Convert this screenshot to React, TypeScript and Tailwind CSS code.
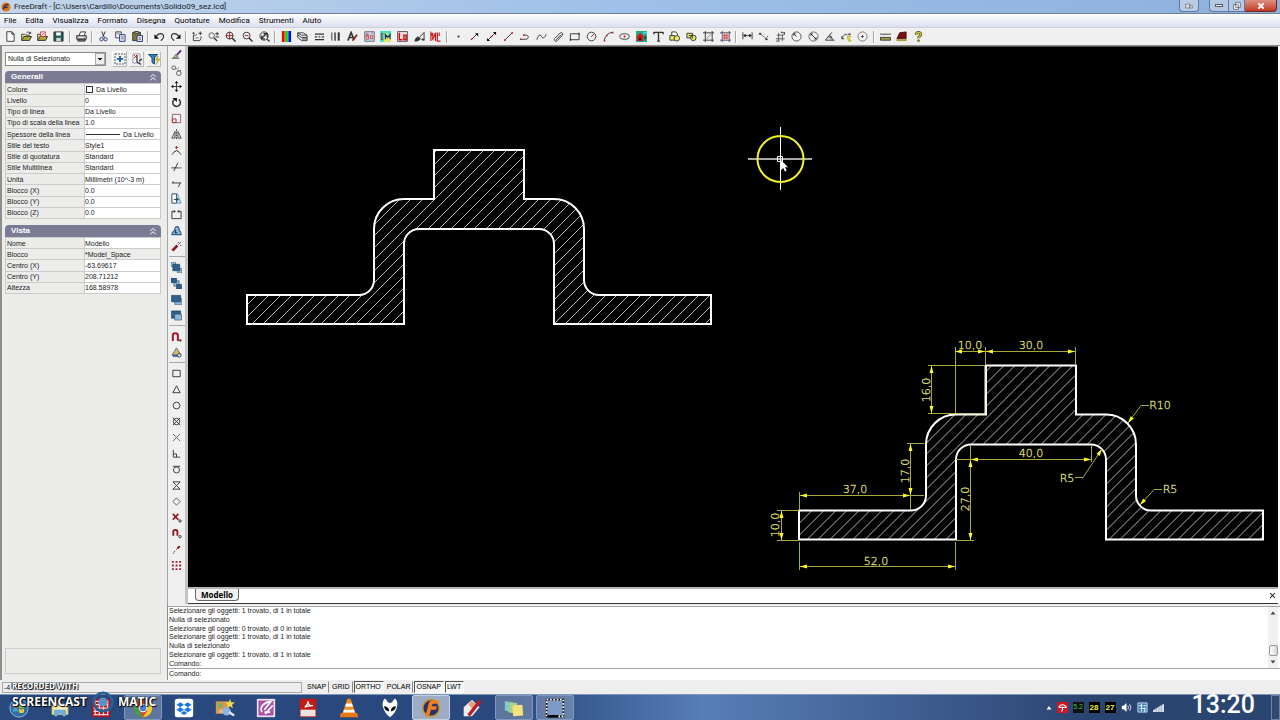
import { useState } from "react";
import type { ReactNode } from "react";

type Tool = { label: string; art: ReactNode };

const t = (label: string, art: ReactNode): Tool => ({ label, art });

function Glyph({ children, className = "w-3 h-3" }: { children: ReactNode; className?: string }) {
  return (
    <svg viewBox="0 0 12 12" className={`${className} shrink-0`} fill="none" stroke="#333" strokeWidth="1" aria-hidden="true">
      {children}
    </svg>
  );
}

const magnifier = (
  <>
    <circle cx="5" cy="5" r="3.7" />
    <path d="M7.7 7.7 11.5 11.5" strokeWidth="1.6" />
  </>
);

const folder = (
  <>
    <path d="M.8 10V3.5H4l1 1h4V6" fill="#f4ee8a" />
    <path d="M.8 10.3 3 6h8.500l-2.200 4.300z" fill="#a9a63a" />
  </>
);

const toolGroups: { width: string; tools: Tool[] }[] = [
  {
    width: "w-[61px]",
    tools: [
      t("Nuovo", <path d="M2 .8h5.500L10 3.500v7.700H2zM7.500.8v2.700H10" fill="#fff" />),
      t("Apri", <>{folder}<path d="M6 2c1.500-1.500 3-1 4 .5M10.500.8v2H8.500" /></>),
      t("Apri modello", <>{folder}<path d="M4 1h5v5H4z" fill="#fff" stroke="#c33" /><path d="M5 5 8 2" stroke="#c33" /></>),
      t("Salva", <><path d="M1 1h10v10H1z" fill="#1f5a52" /><path d="M3.500 1.500h5v3.500h-5z" fill="#fff" stroke="none" /><path d="M3.500 7.500h5V11h-5z" fill="#cfd8d6" stroke="none" /></>),
    ],
  },
  {
    width: "w-3",
    tools: [
      t("Stampa", <><path d="M3.500 4.500 5 1h5.500L9 4.500" fill="#fff" /><path d="M.8 5h10.400v4H.8z" fill="#bbb" /><path d="M2 9h8v2H2z" fill="#777" /><path d="M3 7h5" stroke="#eee" /></>),
    ],
  },
  {
    width: "w-[46px]",
    tools: [
      t("Taglia", <><path d="M4 .5 7 7M8 .5 5 7" stroke="#223" /><circle cx="3.800" cy="9" r="1.800" stroke="#23366e" /><circle cx="8.200" cy="9" r="1.800" stroke="#23366e" /></>),
      t("Copia", <><path d="M.8 1h6v6.500h-6z" fill="#fff" stroke="#334" /><path d="M5 4h6v7.300H5z" fill="#e8ecff" stroke="#23366e" /><path d="M6.500 6.500h3M6.500 8.500h3M2 3h3" stroke="#667" /></>),
      t("Incolla", <><path d="M.8 1.500h8.500v9H.8z" fill="#7d7a32" /><path d="M3 .5h4v2H3z" fill="#ddd" /><path d="M5.500 5h6v6.500h-6z" fill="#e8ecff" stroke="#23366e" /><path d="M7 7.500h3M7 9.500h3" stroke="#667" /></>),
    ],
  },
  {
    width: "w-7",
    tools: [
      t("Annulla", <><path d="M2.500 6C4 2 10.500 1.500 10.500 6c0 2-1.500 3-3 4.500" strokeWidth="1.3" /><path d="M.5 3.500v5h5z" fill="#111" stroke="none" /></>),
      t("Ripeti", <><path d="M9.500 6C8 2 1.500 1.500 1.500 6c0 2 1.500 3 3 4.500" strokeWidth="1.300" /><path d="M11.500 3.500v5h-5z" fill="#111" stroke="none" /></>),
    ],
  },
  {
    width: "w-[79px]",
    tools: [
      t("Panoramica", <><path d="M1.500 4.500v6h7c1-1.500 1.500-3 1.500-4.500M1.500 4.500h2M4 5l1-1.500M7 2.500h4M9 .5v4M.5 2.500h2.500M1.500 1.500v2" /><path d="M3.500 7.500h4" stroke="#777" /></>),
      t("Zoom dinamico", <><circle cx="4" cy="5" r="3" stroke="#555" /><path d="M6.500 7.500 10 11" strokeWidth="1.500" /><path d="M8 3h4M10 1v4M8 6.500h4" /></>),
      t("Zoom avanti", <>{magnifier}<path d="M5 .5v9M.5 5h9" stroke="#a22" /></>),
      t("Zoom indietro", <>{magnifier}<path d="M3 5h4" stroke="#a22" /></>),
      t("Zoom estensioni", <><circle cx="5.500" cy="5.500" r="4.500" /><path d="M2.500 8.500 9 2M5 3h4v4M3 5v3.500h3.500" strokeWidth="1.400" /><path d="M9 9l2.500 2.500" strokeWidth="1.500" /></>),
    ],
  },
  {
    width: "w-[162px]",
    tools: [
      t("Colore", <g stroke="none"><path d="M1 0h3v12H1z" fill="#f00" /><path d="M4.500 0h3v12h-3z" fill="#00e000" /><path d="M8 0h3v12H8z" fill="#0010e8" /></g>),
      t("Livelli", <><path d="M.8 2h6l4 2.500H5z" fill="#fff" /><path d="M.8 2v5L5 10.500h6v-6M1 4.500 5 7h6M5 8.700h6" /></>),
      t("Tipo di linea", <path d="M1 3.500h10M1 6.500h2.500M5 6.500h2M8.500 6.500H11M1 9.500h10" strokeWidth="1.300" />),
      t("Spessore linea", <><path d="M2 1.500v9" /><path d="M5.500 1.500v9" strokeWidth="1.500" /><path d="M9.500 1.500v9" strokeWidth="2.200" /></>),
      t("Stile testo", <><path d="M1 10.500 4.500 1.500 7.500 9M2.500 7h4" strokeWidth="1.700" /><path d="M6 10.500 11 4" stroke="#8a1a1a" strokeWidth="1.800" /></>),
      t("Blocchi", <><path d="M.8.8h10.400v10.400H.8z" fill="#cdd9ee" stroke="#667" /><path d="M2.500 3h2v2.500h-2zM2.500 5.500h2.500V9H2.500zM7 5h2.500v3.500H7zM8 2.500h1.500" stroke="#c44" /></>),
      t("Immagini", <><path d="M0 0h12v12H0z" fill="#3fe3c8" stroke="none" /><path d="M6 1 12 6v6H4z" fill="#e8e460" stroke="none" /><path d="M2 3v6M1 3h2.500M1 9h2.500" stroke="#c22" strokeWidth="1.300" /><path d="M6 9V4l2.500 3L11 4v5" stroke="#17306b" strokeWidth="1.300" /></>),
      t("Layout", <><path d="M.6.6h10.800v10.800H.6z" fill="#f6dede" stroke="#556" /><path d="M2.500 2v7.500H6M7.500 4.500h2.500v5H7.500z" stroke="#c11" strokeWidth="1.600" /></>),
      t("Pennello", <><path d="M1 11c.5-3 2-4.500 4-4.500L7 8.500C5.500 10.500 3.500 11 1 11z" fill="#333" /><path d="M6.500 6.500 11 1.500V9H8" /><path d="M9 9.500h2.500" strokeWidth="2" /></>),
      t("Multilinea", <path d="M1 11V2l3 5 2-5v9M8 1.500v9.500h3.500M10 1.500v4M3 2v8" stroke="#c21c1c" strokeWidth="1.300" />),
    ],
  },
  {
    width: "w-[279px]",
    tools: [
      t("Punto", <path d="M5 6h2" strokeWidth="2" />),
      t("Raggio", <><path d="M2.500 9.500 9 3" /><path d="M6.500 2.500H10V6z" fill="#111" stroke="none" /><path d="M2 9h1.500" stroke="#a22" strokeWidth="1.500" /></>),
      t("Retta", <><path d="M2 10 10 2" /><path d="M7.500 1H11v3.500zM1 7.500V11h3.500z" fill="#111" stroke="none" /><path d="M5 6h2" stroke="#a22" strokeWidth="1.500" /></>),
      t("Linea", <><path d="M2 10 10 2" /><path d="M1.200 10h1.600M9.200 2h1.600" stroke="#a22" strokeWidth="1.800" /></>),
      t("Polilinea", <><path d="M1.500 9h6c3.500 0 3.500-4.500 0-4.500H5" /><path d="M1 9h1.500M4.500 4.500H6" stroke="#a22" strokeWidth="1.700" /></>),
      t("Spline", <path d="M1 9.500C2.500 4 4.500 3 6 6c1.500 2.500 3.500 2 5-2.500" />),
      t("Doppia linea", <path d="M1.500 8.500 8 2c1-1 3.500 1 2.500 2.500L4 11c-1.500.5-3-1-2.500-2.500zM3.500 9.500 9 4" />),
      t("Rettangolo", <><path d="M1.500 3h9.500v6.500H1.500z" /><path d="M.8 9.500h1.600M10 3h1.600" strokeWidth="2" /></>),
      t("Cerchio", <><circle cx="6" cy="6" r="4.700" /><path d="M5.500 6.500 9 3" stroke="#a22" /></>),
      t("Arco", <><path d="M1.500 10.500C2 6 5 2 10.500 1.500" /><path d="M.8 10.500h1.600M3.300 5h1.600M9.700 1.700h1.600" stroke="#a22" strokeWidth="1.800" /></>),
      t("Ellisse", <><ellipse cx="6" cy="6" rx="5.200" ry="3" /><path d="M5 6h2M6 5v2" stroke="#a22" strokeWidth="1.400" /></>),
      t("Blocco", <><path d="M0 0h12v12H0z" fill="#17b08a" stroke="none" /><path d="M1 5.500 4.500 2 8 5.500V11H1z" fill="#e01010" stroke="none" /><path d="M3.500 7h2v3h-2z" fill="#111" stroke="none" /><path d="M8 1h4v4H8z" fill="#3ad7e8" stroke="none" /><path d="M10 3v7M8.500 7h3" stroke="#0c4b20" /></>),
      t("Testo", <path d="M1 1.500h10M6 1.500V11M1 1v2.500M11 1v2.500M4.500 11h3" strokeWidth="1.500" />),
      t("Copia blocco", <><path d="M3 1h4.500l1.500 2v5H3z" fill="#fff" /><path d="M1 5h5v5H1z" fill="#e9e96a" /><circle cx="8.500" cy="8" r="3" fill="#e9e96a" /></>),
      t("Inserisci", <><path d="M1 2.500h6v5H1z" fill="#e9e96a" /><circle cx="8" cy="7.500" r="3" fill="#e9e96a" /><path d="M3 5h4v3" /></>),
      t("Contorno", <><path d="M2.500 0v12M0 2h12M10 0v12M0 10h12" /><path d="M3.500 9 9 3" stroke="#88a" /></>),
      t("Tratteggio", <><path d="M2.500 0v12M0 2h12M10 0v12M0 10h12" stroke="#446" /><path d="M3 2.500h6.500v7H3z" fill="#e8b3b8" stroke="none" /><path d="M3 5h6.500M3 7.500h6.500M5 2.500v7M7.500 2.500v7" stroke="#b33" strokeWidth=".6" /></>),
    ],
  },
  {
    width: "w-[128px]",
    tools: [
      t("Quota lineare", <><path d="M1 1.500V9M11 1.500V9M2 5h8" /><path d="M1.500 5 4 3v4zM10.500 5 8 3v4z" fill="#111" stroke="none" /></>),
      t("Quota allineata", <><path d="M2.500 3 9.500 9" strokeDasharray="2 1" /><path d="M1.500 2.500h1.500v1H1.500zM8.500 8.500H10v1H8.500zM9.500 7 11 5.500" fill="#111" /></>),
      t("Quota ordinate", <><path d="M2 4.500h7M4 2v9M8 4v7M1 8.500h9.500M1 11h4" strokeWidth=".8" /><path d="M6.500 1.500h2M10 1v3" stroke="#444" strokeWidth="1.600" /></>),
      t("Quota raggio", <><circle cx="6" cy="6" r="5" stroke="#555" /><path d="M6 6 3 3M3 5V3h2" /></>),
      t("Quota diametro", <><circle cx="6" cy="6" r="5" stroke="#666" /><path d="M3 3l6 6" /><path d="M3 3h2L3 5zM9 9V7L7 9z" fill="#111" strokeWidth=".5" /></>),
      t("Quota angolare", <path d="M11.500 10H1.500L8.500 1.500M6 4.500c2 1 3 3 3 5.500M4.500 6.500h3v2" />),
      t("Direttrice", <><path d="M1 8.500C2.500 4 5 3 7 4M1 8.500v-3M1 8.500h2.500" /><path d="M7 5.500h3.500L9 8l2 3H8z" fill="#efe94a" stroke="#b5ae25" /><path d="M8 3.500h2.500" strokeWidth="1.500" /></>),
      t("Segno centro", <><circle cx="6" cy="6" r="5" stroke="#777" /><path d="M4.500 6h3M6 4.500v3" stroke="#444" /></>),
    ],
  },
  {
    width: "w-[45px]",
    tools: [
      t("Distanza", <><path d="M1 2.500v2M11 2.500v2M2 3.500h8" /><path d="M.5 7h11v3H.5z" fill="#a8a33c" /></>),
      t("Area", <><path d="M1 8.500 4 2l7-1v7.500z" fill="#7a0f14" stroke="#4b0a0d" /><path d="M.5 9h11v2H.5z" fill="#a8a33c" stroke="none" /></>),
      t("Guida", <><path d="M3.500 4C3 .8 9 .8 8.500 4 8 6 6 5.500 6 8" stroke="#4a4a10" strokeWidth="3" /><path d="M3.500 4C3 .8 9 .8 8.500 4 8 6 6 5.500 6 8" stroke="#d2cf35" strokeWidth="1.500" /><circle cx="6" cy="10.500" r="1" fill="#d2cf35" stroke="#4a4a10" /></>),
    ],
  },
];

const back = "#8fb6d6";
const front = "#2d5f91";

const sideGroups: Tool[][] = [
  [
    t("Cancella", <><path d="M1 10h8" /><path d="m5 6 2.500 2L5 9.500 3 9z" fill="#d9d07a" stroke="#665" /><path d="M6.500 6.500 11 1.500" stroke="#5c2a7a" strokeWidth="2" /></>),
    t("Copia", <><circle cx="3" cy="3" r="2" stroke="#555" /><circle cx="8.500" cy="9" r="2.500" stroke="#555" /><path d="M5 4.500 9 3M7 6h4" stroke="#555" strokeDasharray="1.500 1" /></>),
    t("Sposta", <><path d="M6 1v10M1 6h10" /><path d="m6 0 2 2.500H4zM6 12l2-2.500H4zM0 6l2.500-2v4zM12 6 9.500 4v4z" fill="#111" stroke="none" /></>),
    t("Ruota", <><path d="M4 2.500a4.200 4.200 0 1 0 4.500.2" strokeWidth="1.600" /><path d="M1.500 1h5v4.500z" fill="#111" stroke="none" /></>),
    t("Scala", <><path d="M1.500 1.500h9v9h-9z" stroke="#866" /><path d="M1.500 6.500h4v4h-4z" stroke="#a33" /></>),
    t("Specchio", <><path d="M6 0v12" strokeDasharray="2 1" /><path d="M4.500 2.500V10H.8zM7.500 2.500V10h3.700z" fill="#ccc" strokeWidth=".8" /></>),
    t("Raccorda", <><path d="M1 10.500 4.500 6.500M11 10.500 7.500 6.500M4.500 7.500l1.500-2 1.500 2" /><path d="M6 1v3.500M4.300 2.700h3.400" stroke="#c22" /></>),
    t("Taglia", <><path d="M.5 7.500h11M3 11 7.500 2" /><path d="M7.500 7.500h4" stroke="#eee" strokeDasharray="1 1" /></>),
    t("Estendi", <path d="M1 6.500h9.500M10.500 6 8 11M1 6.500 3 5" />),
    t("Allunga", <><path d="M1 1h6l4 10H1z" fill="#b7dcf2" stroke="#59c" /><path d="M1 1h5v10H1z" fill="#fff" stroke="#456" /><path d="M3 7h5M6.500 5.500 8 7 6.500 8.500" /></>),
    t("Spezza", <><path d="M4 2.500H1v8h10v-8H8" stroke="#333" /><path d="M3 1.500 5 2.500 3 4M9 1.500 7 2.500 9 4" fill="#333" strokeWidth=".5" /></>),
    t("Offset", <><path d="M1 10.500C1 7 3 7 4 6c0-5.500 5-5.500 5 0 2 1 2 2 2 4.500z" fill="#8fb6d6" stroke="#2d5f91" strokeWidth="1.300" /><path d="M5 8.500v-3M4 8.500h3" stroke="#123" /></>),
    t("Esplodi", <><path d="M1.500 10.500 7 5" stroke="#8c1c22" strokeWidth="3" /><path d="M8 4l3-3M8 1v1.500M10 5h1.500" stroke="#555" /></>),
  ],
  [
    t("Porta in primo piano", <g strokeWidth=".6"><path d="M0 0h5v5H0z" fill={back} stroke="#456" /><path d="M7 7h5v5H7z" fill={back} stroke="#456" /><path d="M2 2.500h7.500v7H2z" fill={front} stroke="#134" /></g>),
    t("Porta dietro", <g strokeWidth=".6"><path d="M3 3h6v6H3z" fill={back} stroke="#456" /><path d="M0 0h6v5H0z" fill={front} stroke="#134" /><path d="M6 7h5.500v5H6z" fill={front} stroke="#134" /></g>),
    t("Porta avanti", <g strokeWidth=".6"><path d="M4 5h8v6.500H4z" fill={back} stroke="#456" /><path d="M.5 1.500h10v7H.5z" fill={front} stroke="#134" /></g>),
    t("Porta sotto", <g strokeWidth=".6"><path d="M.5 1h10v8H.5z" fill={front} stroke="#134" /><path d="M4 4.500h7.500V11H4z" fill={back} stroke="#345" /></g>),
  ],
  [
    t("Snap a oggetto", <><path d="M2 11V5c0-3.500 5.500-3.500 5.500 0v6" stroke="#a3162a" strokeWidth="2.200" /><path d="M9.500 9.500H11V11H9.500z" stroke="#333" /></>),
    t("Impostazioni snap", <><path d="M1 9 6 1l5 8z" fill="#d8bd5a" stroke="#667" /><path d="M2 9.500h7" stroke="#37659c" strokeWidth="2.500" /><circle cx="9" cy="9" r="2" fill="#ddd" stroke="#345" /></>),
  ],
  [
    t("Fine", <path d="M2 2.500h8v7H2z" />),
    t("Medio", <path d="M6 2 10 9.500H2z" />),
    t("Centro", <circle cx="6" cy="6" r="3.700" />),
    t("Nodo", <><circle cx="6" cy="6" r="3.500" /><path d="m2 2 8 8M10 2l-8 8" /></>),
    t("Intersezione", <path d="m2 2 8 8M10 2l-8 8" stroke="#666" />),
    t("Perpendicolare", <path d="M2.500 2v8H10M2.500 6.500H6V10" />),
    t("Tangente", <><circle cx="6" cy="6.500" r="3.300" /><path d="M2 2.500h8" /></>),
    t("Vicino", <path d="M2 2h8L2 10h8z" />),
    t("Quadrante", <path d="m6 2 4 4-4 4-4-4z" stroke="#555" />),
    t("Nessuno snap", <><path d="m2 2 6 6.500M8 2 2 8.500" stroke="#8c1420" strokeWidth="1.800" /><circle cx="9.800" cy="9.800" r="1.300" /></>),
    t("Snap rapido", <><path d="M2.500 8.500V4c0-2.500 4.500-2.500 4.500 0v4.500" stroke="#8c1420" strokeWidth="2" /><circle cx="9.800" cy="9.500" r="1.300" /></>),
    t("Da punto", <><path d="m3 9 5-5" stroke="#a33" strokeDasharray="2 1" /><path d="M7 5 9.500 2.500" stroke="#8c1420" strokeWidth="2.200" /><path d="M2 10h1.500" stroke="#a33" /></>),
    t("Griglia", <path d="M1 2h2M5 2h2M9 2h2M1 6h2M5 6h2M9 6h2M1 10h2M5 10h2M9 10h2" stroke="#a3162a" strokeWidth="2" />),
  ],
];

const generalRows: [string, string][] = [
  ["Colore", "Da Livello"],
  ["Livello", "0"],
  ["Tipo di linea", "Da Livello"],
  ["Tipo di scala della linea", "1.0"],
  ["Spessore della linea", "Da Livello"],
  ["Stile del testo", "Style1"],
  ["Stile di quotatura", "Standard"],
  ["Stile Multilinea", "Standard"],
  ["Unità", "Millimetri (10^-3 m)"],
  ["Blocco (X)", "0.0"],
  ["Blocco (Y)", "0.0"],
  ["Blocco (Z)", "0.0"],
];

const viewRows: [string, string][] = [
  ["Nome", "Modello"],
  ["Blocco", "*Model_Space"],
  ["Centro (X)", "-63.69617"],
  ["Centro (Y)", "208.71212"],
  ["Altezza", "168.58978"],
];

const logLines = [
  "Selezionare gli oggetti: 1 trovato, di 1 in totale",
  "Nulla di selezionato",
  "Selezionare gli oggetti: 0 trovato, di 0 in totale",
  "Selezionare gli oggetti: 1 trovato, di 1 in totale",
  "Nulla di selezionato",
  "Selezionare gli oggetti: 1 trovato, di 1 in totale",
  "Comando:",
];

function TitleBar() {
  return (
    <header className="flex h-[13px] shrink-0 items-center justify-between bg-linear-to-r from-[#c3d5ea] via-[#9dbfe8] to-[#8db0de] pl-px">
      <div className="flex items-center gap-[3px]">
        <Glyph className="w-[10px] h-[10px]">
          <circle cx="6" cy="6" r="5.500" fill="#e07a1c" stroke="none" />
          <path d="M3 9C3 4 5 3 9 3M4.500 6.500H8" stroke="#2b2f63" strokeWidth="2" />
        </Glyph>
        <h1 className="font-['Roboto',sans-serif] text-[8px] leading-3 text-[#16181c]">FreeDraft - [C:\Users\Cardillo\Documents\Solido09_sez.lcd]</h1>
      </div>
      <div className="flex h-3 items-start self-start pr-[3px]">
        <button aria-label="Sposta schermo" className="mr-2.5 flex h-3 w-5 items-center justify-center rounded-b-sm border border-t-0 border-[#5f7a9c] bg-[#b9cce4]">
          <Glyph className="w-[10px] h-2"><path d="M1 3h6v6H1zM7 5h4v4H7z" stroke="#667" fill="#ddd" /></Glyph>
        </button>
        <button aria-label="Riduci a icona" className="flex h-3 w-5 items-center justify-center rounded-bl-sm border border-t-0 border-[#5f7a9c] bg-[#b4c9e3]">
          <span className="h-[3px] w-2 border border-[#556] bg-white" />
        </button>
        <button aria-label="Ripristina" className="flex h-3 w-4 items-center justify-center border border-t-0 border-l-0 border-[#5f7a9c] bg-[#b4c9e3]">
          <Glyph className="w-2 h-2"><path d="M4 1h7v7H4zM1 4h7v7H1z" stroke="#445" fill="#fff" /></Glyph>
        </button>
        <button aria-label="Chiudi" className="flex h-3 w-8 items-center justify-center rounded-br-sm border border-t-0 border-l-0 border-[#6b2a24] bg-linear-to-b from-[#dd8f83] to-[#c2361f]">
          <Glyph className="w-2 h-2"><path d="m2 2 8 8M10 2l-8 8" stroke="#fff" strokeWidth="3" /></Glyph>
        </button>
      </div>
    </header>
  );
}

function MenuBar() {
  const menus = ["File", "Edita", "Visualizza", "Formato", "Disegna", "Quotature", "Modifica", "Strumenti", "Aiuto"];
  return (
    <nav className="flex h-[15px] shrink-0 items-center gap-[9px] border-t border-[#6f7f9c] border-b border-b-[#cfd0da] bg-linear-to-b from-white to-[#dcdff0] pl-1">
      {menus.map((m) => (
        <button key={m} className="font-['Roboto',sans-serif] text-[8px] leading-3 text-black">{m}</button>
      ))}
    </nav>
  );
}

function Toolbar() {
  return (
    <div role="toolbar" className="flex h-[18px] shrink-0 items-center border-b border-[#8b8b8b] bg-[#f0f0f0] pl-1">
      {toolGroups.map((g, i) => (
        <div key={i} className="flex items-center">
          {i > 0 && <span className="mx-1 h-3 w-0.5 border-l border-[#a5a5a5] bg-white" />}
          <div className={`flex justify-between ${g.width}`}>
            {g.tools.map((tool) => (
              <button key={tool.label} aria-label={tool.label} title={tool.label} className="flex h-3 w-3 items-center justify-center">
                <Glyph className="w-[11px] h-[11px]">{tool.art}</Glyph>
              </button>
            ))}
          </div>
        </div>
      ))}
    </div>
  );
}

function PropertySection({ title, rows, height }: { title: string; rows: [string, string][]; height: string }) {
  const [open, setOpen] = useState(true);
  return (
    <section>
      <button onClick={() => setOpen(!open)} className="flex h-3 w-full items-center justify-between rounded-t-sm bg-[#7c7b95] pl-1.5 pr-1 text-[8px] font-bold text-white">
        <span>{title}</span>
        <Glyph className="w-2 h-2"><path d="m2 6 4-4 4 4M2 11l4-4 4 4" stroke="#fff" strokeWidth="1.500" /></Glyph>
      </button>
      {open && (
        <table className={`w-full table-fixed border-collapse leading-[9px] ${height}`}>
          <tbody>
            {rows.map(([name, value]) => {
              const locked = value === "*Model_Space";
              return (
                <tr key={name}>
                  <th scope="row" className="w-[79px] overflow-visible whitespace-nowrap border border-[#cbcbc8] p-0 pl-px text-left font-normal">{name}</th>
                  <td className={`whitespace-nowrap border border-[#cbcbc8] p-0 ${locked ? "bg-[#ececea]" : "bg-white"}`}>
                    <div className="flex items-center">
                      {name === "Colore" && <span className="mr-[3px] ml-px h-[7px] w-[7px] shrink-0 border border-[#333] bg-white" />}
                      {name === "Spessore della linea" && <span className="mr-[3px] ml-px h-px w-[34px] shrink-0 bg-[#333]" />}
                      <input aria-label={name} defaultValue={value} readOnly={locked} className="h-[9px] w-full min-w-0 bg-transparent p-0 leading-[9px] outline-none" />
                    </div>
                  </td>
                </tr>
              );
            })}
          </tbody>
        </table>
      )}
    </section>
  );
}

function PropertiesPanel() {
  return (
    <aside className="flex w-[167px] shrink-0 flex-col gap-1.5 border-l-2 border-[#8e8e8e] bg-[#ececeb] pb-1.5 pl-[3px] pr-1.5 pt-[5px]">
      <div className="-mb-0.5 flex items-center justify-between">
        <div className="relative">
          <select aria-label="Selezione" className="block h-[14px] w-[101px] appearance-none border border-[#8a8a8a] bg-white pl-0.5 leading-3 outline-none">
            <option>Nulla di Selezionato</option>
          </select>
          <span className="pointer-events-none absolute right-px top-px flex h-3 w-[10px] items-center justify-center border border-[#aaa] bg-[#eee]">
            <Glyph className="w-1.5 h-1.5"><path d="M1 4h10L6 9z" fill="#111" stroke="none" /></Glyph>
          </span>
        </div>
        <div className="flex gap-0.5">
          <button aria-label="Seleziona oggetti" className="flex h-4 w-[15px] items-center justify-center border border-[#b9b9b9] border-t-white border-l-white bg-[#f1f1f0]">
            <Glyph><path d="M1 1h10v10H1z" stroke="#567" strokeDasharray="2 1" /><path d="M6 3v6M3 6h6" stroke="#2d6aa5" strokeWidth="2" /></Glyph>
          </button>
          <button aria-label="Deseleziona" className="flex h-4 w-[15px] items-center justify-center border border-[#b9b9b9] border-t-white border-l-white bg-[#f1f1f0]">
            <Glyph><path d="M2 1h7v9H2z" fill="#fff" stroke="#99a" /><path d="M6 2v7l4 2.500M8 8l3-2" stroke="#334" strokeWidth="1.300" /><path d="m3 2 3 3M6 2 3 5" stroke="#c22" /></Glyph>
          </button>
          <button aria-label="Filtro rapido" className="flex h-4 w-[15px] items-center justify-center border border-[#b9b9b9] border-t-white border-l-white bg-[#f1f1f0]">
            <Glyph><path d="M.5 1.500h9L6.500 5v6L4 9.500V5z" fill="#3b7fb8" stroke="#1d4f7c" /><path d="M10 3 7.500 7H10l-2 4.500L12 6H9.500z" fill="#f3d52b" stroke="#94801a" strokeWidth=".5" /></Glyph>
          </button>
        </div>
      </div>
      <PropertySection title="Generali" rows={generalRows} height="h-[136px]" />
      <PropertySection title="Vista" rows={viewRows} height="h-[57px]" />
      <div className="mt-auto h-[26px] border border-[#cdcdcd]" />
    </aside>
  );
}

function SideToolbar() {
  return (
    <div role="toolbar" aria-orientation="vertical" className="flex w-[18px] shrink-0 flex-col items-center border-l border-[#a5a5a5] bg-[#f0f0f0]">
      {sideGroups.map((group, i) => (
        <div key={i} className="flex flex-col items-center">
          {i > 0 && <span className="my-0.5 h-px w-4 bg-[#a9a9a9]" />}
          {group.map((tool) => (
            <button key={tool.label} aria-label={tool.label} title={tool.label} className="flex h-4 w-4 items-center justify-center">
              <Glyph className="w-[11px] h-[11px]">{tool.art}</Glyph>
            </button>
          ))}
        </div>
      ))}
    </div>
  );
}

// Bracket profile, in drawing coordinates; both views use the same outline.
const PROFILE =
  "M247 295H359A15 15 0 0 0 374 280V229A30 30 0 0 1 404 199H434V150H524V199H554A30 30 0 0 1 584 229V280A15 15 0 0 0 599 295H711V324H554V244A15 15 0 0 0 539 229H419A15 15 0 0 0 404 244V324H247Z";

function Profile({ id, phase, x = 0, y = 0 }: { id: string; phase: number; x?: number; y?: number }) {
  const lines = Array.from({ length: 66 }, (_, i) => `M${Math.round(phase + i * 11.62)} 325l190-190`).join("");
  return (
    <g transform={`translate(${x} ${y})`} fill="none">
      <clipPath id={id}><path d={PROFILE} /></clipPath>
      <path d={lines} clipPath={`url(#${id})`} stroke="#b4b4b4" strokeWidth="1" />
      <path d={PROFILE} stroke="#fff" strokeWidth="2" />
    </g>
  );
}

function Arrow({ x, y, angle }: { x: number; y: number; angle: number }) {
  return <path d="M0 0-7-2V2Z" transform={`translate(${x} ${y}) rotate(${angle})`} fill="#ffff1e" stroke="none" />;
}

function Label({ x, y, children, vertical = false }: { x: number; y: number; children: string; vertical?: boolean }) {
  return (
    <text
      transform={`translate(${x} ${y})${vertical ? " rotate(-90)" : ""}`}
      textAnchor="middle"
      fill="#f0f488"
      stroke="#d8dc6c"
      strokeWidth=".3"
      className="font-['DejaVu_Sans_Light','DejaVu_Sans',sans-serif] text-[11px] font-extralight"
    >
      {children}
    </text>
  );
}

function Dimensions() {
  return (
    <g stroke="#a9a943" strokeWidth="1" fill="none">
      <path d="M955.500 347V413M985.500 347V365M1075.500 347V364M955 351.500H1076" />
      <path d="M928 365.500H985M928 413.500H956M931.500 365V413" />
      <path d="M907 443.500H924M910.500 443V510M799 495.500H924M799.500 492V510" />
      <path d="M777 510.500H799M777 540.500H799M781.500 510V540" />
      <path d="M799.500 542V570M955.500 542V570M799 566.500H956" />
      <path d="M956 459.500H1091M970.500 445V540M956 540.500H974M1091.500 445V462" />
      <path d="M1149 405.500H1141L1128 423M1075 477.500H1083L1102 449M1162 489.500H1154L1140 505" />
      <path d="M955 414H985V366" stroke="#f4f3b4" strokeWidth="1" />
      <Arrow x={955} y={351.5} angle={180} />
      <Arrow x={985} y={351.5} angle={0} />
      <Arrow x={986} y={351.5} angle={180} />
      <Arrow x={1075} y={351.5} angle={0} />
      <Arrow x={931.5} y={366} angle={-90} />
      <Arrow x={931.5} y={413} angle={90} />
      <Arrow x={910.5} y={444} angle={-90} />
      <Arrow x={910.5} y={495} angle={90} />
      <Arrow x={800} y={495.5} angle={180} />
      <Arrow x={910} y={495.5} angle={0} />
      <Arrow x={781.5} y={511} angle={-90} />
      <Arrow x={781.5} y={540} angle={90} />
      <Arrow x={800} y={566.5} angle={180} />
      <Arrow x={955} y={566.5} angle={0} />
      <Arrow x={970.5} y={460} angle={-90} />
      <Arrow x={970.5} y={540} angle={90} />
      <Arrow x={971} y={459.5} angle={180} />
      <Arrow x={1091} y={459.5} angle={0} />
      <Arrow x={1128} y={423} angle={127} />
      <Arrow x={1102} y={449} angle={-56} />
      <Arrow x={1140} y={505} angle={131} />
      <Label x={970} y={349}>10,0</Label>
      <Label x={1031} y={349}>30,0</Label>
      <Label x={930} y={390} vertical>16,0</Label>
      <Label x={909} y={471} vertical>17,0</Label>
      <Label x={855} y={493}>37,0</Label>
      <Label x={779} y={525} vertical>10,0</Label>
      <Label x={876} y={565}>52,0</Label>
      <Label x={969} y={499} vertical>27,0</Label>
      <Label x={1031} y={457}>40,0</Label>
      <Label x={1160} y={409}>R10</Label>
      <Label x={1067} y={482}>R5</Label>
      <Label x={1170} y={493}>R5</Label>
    </g>
  );
}

function DrawingCanvas() {
  return (
    <div className="min-h-0 flex-1 border-t border-[#555] bg-black">
      <svg viewBox="188 47 1090 540" className="block h-full w-full" role="img" aria-label="Modello">
        <Profile id="plain" phase={-40} />
        <Profile id="dimensioned" phase={-37} x={552} y={215.5} />
        <Dimensions />
        <path d="M748 159H812" stroke="#a8a8a8" strokeWidth="2" />
        <path d="M780.500 127V190" stroke="#fff" />
        <circle cx="780.500" cy="159" r="23" fill="none" stroke="#f2f22c" strokeWidth="2" />
        <path d="M777.500 156.500h5v5h-5z" fill="none" stroke="#fff" />
        <path d="M781 160v10l2.300-2 1.600 3.500 1.700-.8-1.600-3.500h3z" fill="#fff" />
      </svg>
    </div>
  );
}

function CommandArea() {
  return (
    <div className="flex shrink-0 flex-col bg-[#f0f0f0] pt-0.5">
      <div className="flex h-[63px] border-y border-[#a5a5a5] bg-white">
        <div className="flex flex-1 flex-col justify-between pl-px leading-2">
          {logLines.map((line, i) => (
            <p key={i}>{line}</p>
          ))}
        </div>
        <div className="mr-0.5 flex w-[10px] flex-col items-center bg-[#f0f0f0] py-0.5">
          <button aria-label="Scorri su" className="flex h-2 items-center"><Glyph className="w-1.5 h-1.5"><path d="M6 3 11 9H1z" fill="#444" stroke="none" /></Glyph></button>
          <span className="mt-auto mb-0.5 h-[11px] w-[9px] rounded-xs border border-[#999] bg-linear-to-r from-white to-[#d5d5d5]" />
          <button aria-label="Scorri giù" className="flex h-2 items-center"><Glyph className="w-1.5 h-1.5"><path d="M1 3h10L6 9z" fill="#444" stroke="none" /></Glyph></button>
        </div>
      </div>
      <div className="flex h-[11px] items-center bg-white pl-px">
        <label htmlFor="command">Comando:</label>
        <input id="command" className="h-[9px] flex-1 pl-1 outline-none" />
      </div>
    </div>
  );
}

function StatusBar() {
  const [active, setActive] = useState<string[]>(["ORTHO", "OSNAP", "LWT"]);
  const toggle = (mode: string) =>
    setActive((prev) => (prev.includes(mode) ? prev.filter((m) => m !== mode) : [...prev, mode]));

  return (
    <div className="flex h-[14px] shrink-0 items-center gap-px bg-[#eeeeee] pl-0.5">
      <div className="mr-0.5 h-[11px] w-[300px] border border-[#a9a9a9] pl-px leading-[9px]">-4</div>
      {["SNAP", "GRID", "ORTHO", "POLAR", "OSNAP", "LWT"].map((mode) => (
        <button
          key={mode}
          onClick={() => toggle(mode)}
          aria-pressed={active.includes(mode)}
          className={`h-3 border pr-0.5 pl-px leading-[10px] text-black ${active.includes(mode) ? "border-[#fafafa] border-l-[#555] border-t-[#555] bg-[#f6f6f6]" : "border-transparent border-r-[#888]"}`}
        >
          {mode}
        </button>
      ))}
    </div>
  );
}

const taskItems: { label: string; state: string; art: ReactNode }[] = [
  { label: "Start", state: "", art: <><circle cx="12" cy="12" r="11" fill="#2f6fa6" stroke="#9cc6e6" /><path d="M5 8q3-2 6 0v4q-3-2-6 0z" fill="#e5622a" /><path d="M12 8q3 2 6 0v4q-3 2-6 0z" fill="#86bf3c" /><path d="M5 13q3-2 6 0v4q-3-2-6 0z" fill="#3fa0e0" /><path d="M12 13q3 2 6 0v4q-3 2-6 0z" fill="#f2c62d" /></> },
  { label: "Esplora risorse", state: "", art: <><path d="M2 5h8l2 2h10v13H2z" fill="#e9cf74" /><path d="M4 9h16v7H4z" fill="#f8eeb5" /><path d="M5 14h14v8h-4v-3H9v3H5z" fill="#69aede" /></> },
  { label: "Registratore", state: "", art: <><path d="M1 1h22v22H1z" fill="#b0141c" /><path d="M3 4h18M3 8h18M3 12h18M3 16h18M3 20h18M5 3v18M10 3v18M15 3v18M20 3v18" stroke="#f3d5d5" strokeWidth="1.500" /></> },
  { label: "Chrome", state: "border-[#7e98c0] bg-white/25", art: <><circle cx="12" cy="12" r="11" fill="#e0442f" /><path d="M2.500 6.500 8 16l4 7A11 11 0 0 1 2.500 6.500z" fill="#3fa14b" /><path d="M22 7.500H12l5 8L12 23A11 11 0 0 0 22 7.500z" fill="#f3cb32" /><circle cx="12" cy="12" r="5" fill="#fff" /><circle cx="12" cy="12" r="4" fill="#4680d8" /></> },
  { label: "Dropbox", state: "", art: <><rect x="1" y="1" width="22" height="22" rx="3" fill="#fff" /><path d="m7.500 5 4.500 3-4.500 3L3 8zM16.500 5 21 8l-4.500 3L12 8zM7.500 11l4.500 3-4.500 3L3 14zM16.500 11l4.500 3-4.500 3-4.500-3zM12 15.500l4 2.500-4 2.500L8 18z" fill="#1878e0" /></> },
  { label: "Galleria", state: "", art: <><path d="M1 4h15v15H1z" fill="#d09a55" /><circle cx="6" cy="9" r="3" fill="#7fae6b" /><path d="M5 14h9v4H5z" fill="#e7b98a" /><path d="m18 1 1.500 4H24l-3.500 3 1 4.500L18 10l-4 2.500 1.500-4.500L12 5h4.500z" fill="#f0d94d" /><circle cx="14" cy="16" r="5" fill="#8fb4e2" /><path d="M17 17l6 4" stroke="#dfe8f5" strokeWidth="3" /></> },
  { label: "Editor", state: "", art: <><path d="M1 1h22v22H1z" fill="#f1dff3" /><path d="M3 3h18v18H3z" fill="#a852ae" /><path d="M7 17C4 10 10 5 18 4L10 14M10 17h7M11 19l9-10" stroke="#fff" strokeWidth="2" fill="none" /></> },
  { label: "PDF", state: "", art: <><path d="M2 1h20v22H2z" fill="#c21a16" /><path d="M3 14h18v8H3z" fill="#e9e3e1" /><path d="M8 11c3-2 4-5 4-7 0 4 3 6 6 5-4 0-7 0-10 2z" stroke="#fff" fill="none" strokeWidth="1.500" /></> },
  { label: "VLC", state: "", art: <><path d="M10 1h4l6 18H4z" fill="#f08a1c" /><path d="M8.500 6.500h7l1.200 4H7.300zM6 14h12l1 3.500H5z" fill="#fff" /><path d="M2 18h20l1 5H1z" fill="#e87812" /></> },
  { label: "Foobar2000", state: "", art: <><path d="M12 23C8 20 5 16 4 12 2 8 4 1 6 1s2 5 6 5 4-5 6-5 4 7 2 11c-1 4-4 8-8 11z" fill="#fff" /><path d="M5 10c4 0 6 3 6 6-4 0-6-3-6-6zM19 10c-4 0-6 3-6 6 4 0 6-3 6-6z" fill="#111" /></> },
  { label: "FreeDraft", state: "border-[#c2d1e6] bg-white/55", art: <><circle cx="12" cy="12" r="11" fill="#c2952a" /><circle cx="12" cy="12" r="9" fill="#2b2f6b" /><path d="M5 22C7 16 8 12 9 7q1-4 6-4h7l-1 4h-6q-2 0-2 3h6l-1 4h-6c-1 4-2 6-3 8z" fill="#f08020" /></> },
  { label: "Disegno", state: "", art: <><path d="m2 11 10-9 9 9-9 11H2z" fill="#f1eee8" /><path d="m11 3 8 6-6 5-5-6z" fill="#eaa17a" /><path d="M8 21 22 3" stroke="#b2202a" strokeWidth="4" /></> },
  { label: "Note", state: "border-[#7e98c0] bg-white/25", art: <><path d="m1 4 10 1v12L1 15z" fill="#7fc9d8" /><path d="m6 5 10 1-1 13L5 17z" fill="#9fd28c" /><path d="m10 9 12-1 1 13-12 1z" fill="#f4e27c" /></> },
  { label: "Cattura", state: "border-[#7e98c0] bg-white/25", art: <><path d="M2 2h20v20H2z" fill="#7d9ac6" stroke="#111" strokeWidth="2" /><path d="M2 2h20v20H2z" fill="none" stroke="#fff" strokeWidth="2" strokeDasharray="2 2" /><path d="M3 22h13" stroke="#000" strokeWidth="3" /></> },
];

function Taskbar() {
  return (
    <footer className="flex h-[26px] shrink-0 items-center justify-between border-t border-[#8195b5] bg-linear-to-r from-[#28487e] from-40% via-[#587eb8] via-55% to-[#2b4571] to-85%">
      <div className="flex w-[574px] justify-between">
        {taskItems.map((item) => (
          <button key={item.label} aria-label={item.label} className={`flex h-[25px] w-[38px] items-center justify-center rounded-xs border ${item.state || "border-transparent"}`}>
            <svg viewBox="0 0 24 24" className="h-5 w-5" fill="none">{item.art}</svg>
          </button>
        ))}
      </div>
      <div className="flex items-center text-white">
        <div className="flex items-center gap-[5px]">
          <button aria-label="Mostra icone nascoste"><Glyph className="w-1.5 h-1.5"><path d="M6 2 11 9H1z" fill="#fff" stroke="none" /></Glyph></button>
          <button aria-label="Avira" className="flex h-[11px] w-[11px] items-center justify-center bg-[#d01822]">
            <Glyph className="w-[9px] h-[9px]"><path d="M1 6C3 1 9 1 11 6H1M6 5v4q0 2-2 1.500" stroke="#fff" strokeWidth="1.500" /></Glyph>
          </button>
          <span className="flex h-[11px] w-[11px] items-center justify-center bg-[#111] text-[7px] text-[#3fc24a]">5.2</span>
          <span className="flex h-[11px] w-[11px] items-center justify-center bg-black text-[8px] font-bold text-[#f4ee3a]">28</span>
          <span className="flex h-[11px] w-[11px] items-center justify-center bg-black text-[8px] font-bold text-[#f4ee3a]">27</span>
          <button aria-label="Volume"><Glyph className="w-[11px] h-[11px]"><path d="M1 4h2l3-3v10L3 8H1z" fill="#fff" stroke="none" /><path d="M7.500 4q1.500 2 0 4M9.500 2.500q2.500 3.500 0 7" stroke="#dde6f2" /></Glyph></button>
          <button aria-label="Utilità"><Glyph className="w-[11px] h-[11px]"><path d="M1 1h10v10H1z" fill="#3f7fc0" stroke="#cde" /><path d="M5 2v8M2.500 4H6M7 4h3M8.500 6v5M3 7h6" stroke="#fff" /></Glyph></button>
          <button aria-label="Rete"><Glyph className="w-[11px] h-[11px]"><path d="M0 11V9l12-7v9z" fill="#d5dce8" stroke="none" /><path d="M3.500 11V6M6.500 11V4M9 11V2" stroke="#7386a6" strokeWidth=".5" /></Glyph></button>
        </div>
        <time className="ml-7 self-start font-['Roboto',sans-serif] text-[25px] font-medium leading-[19px]">13:20</time>
        <button aria-label="Mostra desktop" className="ml-4 h-[25px] w-[9px] border border-[#6d82a6] bg-[#31496f]" />
      </div>
    </footer>
  );
}

// Recorder badge that floats over the status bar and the taskbar.
function RecorderBadge() {
  return (
    <div className="pointer-events-none absolute bottom-[10px] left-3 font-['Open_Sans',sans-serif] font-bold text-white [text-shadow:1px_1px_1px_#000,-1px_0_1px_#000]">
      <p className="mb-1 text-[8px] leading-2">RECORDED WITH</p>
      <div className="flex h-4 items-center gap-1 text-[12px]">
        <span className="w-[76px]">SCREENCAST</span>
        <svg viewBox="0 0 24 24" className="h-[22px] w-[22px]" fill="none" aria-hidden="true">
          <circle cx="12" cy="12" r="10" stroke="#2c5f94" strokeWidth="3" />
          <circle cx="12" cy="12" r="5" fill="#5c90c4" />
        </svg>
        <span>MATIC</span>
      </div>
    </div>
  );
}

export default function App() {
  return (
    <div className="relative flex h-screen w-full flex-col overflow-hidden bg-[#f0f0f0] font-['Liberation_Sans',Arial,sans-serif] text-[7px] text-[#1a1a1a]">
      <TitleBar />
      <MenuBar />
      <Toolbar />
      <div className="flex min-h-0 flex-1">
        <PropertiesPanel />
        <div className="flex min-w-0 flex-1 flex-col">
          <div className="flex min-h-0 flex-1">
            <SideToolbar />
            <main className="flex min-w-0 flex-1 flex-col border-r-2 border-l-[3px] border-white border-l-[#c4c4c4]">
              <DrawingCanvas />
              <div className="flex h-[17px] shrink-0 items-start justify-between border-b border-t-2 border-b-[#333] border-t-[#b5b5b5] bg-white pl-[7px] pr-0.5">
                <button className="h-3 w-11 rounded-b-sm border border-t-0 border-[#666] bg-[#f0f0f0] font-['Open_Sans',sans-serif] text-[8px] font-bold leading-[11px] text-black">Modello</button>
                <button aria-label="Chiudi scheda" className="flex h-3 w-2 items-center justify-center">
                  <Glyph className="w-[7px] h-[7px]"><path d="m2 2 8 8M10 2l-8 8" strokeWidth="2" /></Glyph>
                </button>
              </div>
            </main>
          </div>
          <div className="border-l border-[#8e8e8e]">
            <CommandArea />
          </div>
        </div>
      </div>
      <StatusBar />
      <Taskbar />
      <RecorderBadge />
    </div>
  );
}
